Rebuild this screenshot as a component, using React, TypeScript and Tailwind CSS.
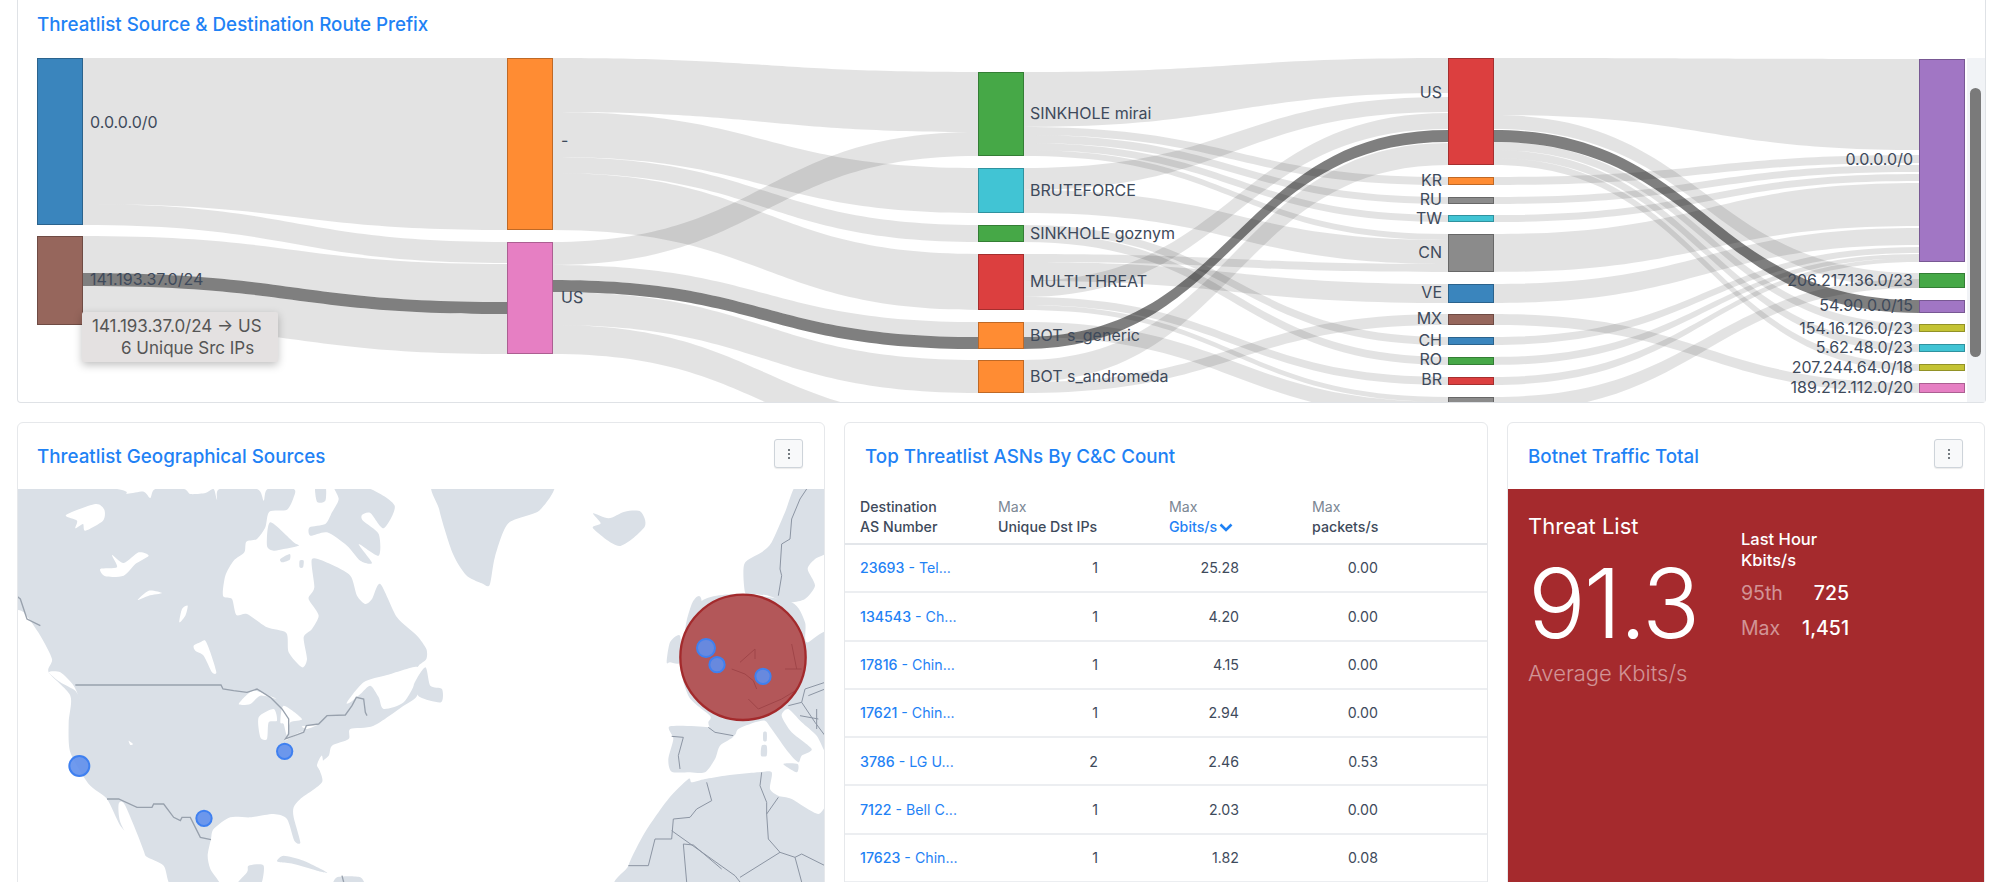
import React from "react";

const X = [82, 552, 1023, 1493];
const XE = [507, 978, 1448, 1919];
type L = [number, number, number, number, number, boolean?];
const links: L[] = [
  [0, 58, 204, 58, 230],
  [0, 204, 225, 242, 263],
  [0, 236, 273, 264, 302],
  [0, 286, 325, 314, 354],
  [0, 273, 286, 302, 314, true],
  [1, 58, 112, 72, 132],
  [1, 112, 157, 168, 213],
  [1, 157, 173, 225, 242],
  [1, 173, 230, 254, 310],
  [1, 242, 265, 132, 156],
  [1, 265, 280, 322, 337],
  [1, 292, 325, 360, 393],
  [1, 325, 354, 420, 450],
  [1, 280, 292, 337, 349, true],
  [2, 72, 127, 58, 93],
  [2, 168, 190, 97, 112],
  [2, 127, 135, 177, 185],
  [2, 135, 143, 197, 204],
  [2, 143, 150, 215, 222],
  [2, 150, 156, 234, 240],
  [2, 190, 213, 240, 264],
  [2, 225, 233, 337, 345],
  [2, 233, 242, 357, 365],
  [2, 254, 262, 264, 272],
  [2, 262, 281, 284, 303],
  [2, 281, 297, 113, 129],
  [2, 297, 305, 377, 385],
  [2, 305, 310, 397, 402],
  [2, 322, 337, 402, 417],
  [2, 360, 382, 143, 165],
  [2, 382, 393, 314, 325],
  [2, 337, 349, 130, 142, true],
  [3, 58, 115, 59, 150],
  [3, 115, 129, 273, 288],
  [3, 142, 150, 324, 332],
  [3, 150, 158, 344, 352],
  [3, 158, 165, 364, 371],
  [3, 177, 185, 155, 163],
  [3, 197, 204, 165, 172],
  [3, 215, 222, 174, 181],
  [3, 234, 272, 183, 226],
  [3, 284, 303, 228, 245],
  [3, 314, 325, 383, 393],
  [3, 337, 345, 247, 253],
  [3, 357, 365, 254, 258],
  [3, 377, 385, 258, 262],
  [3, 397, 412, 279, 288],
  [3, 130, 142, 300, 313, true],
];

function ribbon(l: L) {
  const x0 = X[l[0]];
  const x1 = XE[l[0]];
  const m = (x0 + x1) / 2;
  return `M${x0} ${l[1]}C${m} ${l[1]} ${m} ${l[3]} ${x1} ${l[3]}L${x1} ${l[4]}C${m} ${l[4]} ${m} ${l[2]} ${x0} ${l[2]}Z`;
}

type N = [number, number, number, string, string];
const nodes: N[] = [
  [37, 58, 225, "#3a85bd", "#2b638d"],
  [37, 236, 325, "#96665c", "#6f4b44"],
  [507, 58, 230, "#ff8c33", "#bf6926"],
  [507, 242, 354, "#e67fc3", "#ac5f92"],
  [978, 72, 156, "#46a847", "#347e35"],
  [978, 168, 213, "#41c4d4", "#30929f"],
  [978, 225, 242, "#46a847", "#347e35"],
  [978, 254, 310, "#dc3f3f", "#a52f2f"],
  [978, 322, 349, "#ff8c33", "#bf6926"],
  [978, 360, 393, "#ff8c33", "#bf6926"],
  [1448, 58, 165, "#dc3f3f", "#a52f2f"],
  [1448, 177, 185, "#ff8c33", "#bf6926"],
  [1448, 197, 204, "#8b8b8b", "#686868"],
  [1448, 215, 222, "#41c4d4", "#30929f"],
  [1448, 234, 272, "#8b8b8b", "#686868"],
  [1448, 284, 303, "#3a85bd", "#2b638d"],
  [1448, 314, 325, "#96665c", "#6f4b44"],
  [1448, 337, 345, "#3a85bd", "#2b638d"],
  [1448, 357, 365, "#46a847", "#347e35"],
  [1448, 377, 385, "#dc3f3f", "#a52f2f"],
  [1448, 397, 425, "#8b8b8b", "#686868"],
  [1919, 59, 262, "#a176c4", "#785893"],
  [1919, 273, 288, "#46a847", "#347e35"],
  [1919, 300, 313, "#a176c4", "#785893"],
  [1919, 324, 332, "#c4c334", "#929227"],
  [1919, 344, 352, "#41c4d4", "#30929f"],
  [1919, 364, 371, "#c4c334", "#929227"],
  [1919, 383, 393, "#e67fc3", "#ac5f92"],
];

type T = [string, number, number];
const startLabels: T[] = [
  ["0.0.0.0/0", 90, 122],
  ["141.193.37.0/24", 90, 279],
  ["-", 561, 140],
  ["US", 561, 297],
  ["SINKHOLE mirai", 1030, 113],
  ["BRUTEFORCE", 1030, 190],
  ["SINKHOLE goznym", 1030, 233],
  ["MULTI_THREAT", 1030, 281],
  ["BOT s_generic", 1030, 335],
  ["BOT s_andromeda", 1030, 376],
];
const endLabels: T[] = [
  ["US", 1442, 92],
  ["KR", 1442, 180],
  ["RU", 1442, 199],
  ["TW", 1442, 218],
  ["CN", 1442, 252],
  ["VE", 1442, 292],
  ["MX", 1442, 318],
  ["CH", 1442, 340],
  ["RO", 1442, 359],
  ["BR", 1442, 379],
  ["0.0.0.0/0", 1913, 159],
  ["206.217.136.0/23", 1913, 280],
  ["54.90.0.0/15", 1913, 305],
  ["154.16.126.0/23", 1913, 328],
  ["5.62.48.0/23", 1913, 347],
  ["207.244.64.0/18", 1913, 367],
  ["189.212.112.0/20", 1913, 387],
];

function Sankey() {
  return (
    <svg width={1967} height={345} viewBox="18 58 1967 345" className="block">
      {links.map((l, i) => (
        <path key={i} d={ribbon(l)} fill="#000" fillOpacity={l[5] ? 0.5 : 0.11} />
      ))}
      {nodes.map((n, i) => (
        <rect key={i} x={n[0] + 0.5} y={n[1] + 0.5} width={45} height={n[2] - n[1] - 1} fill={n[3]} stroke={n[4]} />
      ))}
      <g fill="#3e4a5b" fontSize={16} dominantBaseline="central">
        {startLabels.map((t, i) => (
          <text key={i} x={t[1]} y={t[2]}>{t[0]}</text>
        ))}
        {endLabels.map((t, i) => (
          <text key={i} x={t[1]} y={t[2]} textAnchor="end">{t[0]}</text>
        ))}
      </g>
    </svg>
  );
}

function smooth(pts: string) {
  const p = pts.split(" ").map((s) => s.split(",").map(Number));
  const n = p.length;
  let d = `M${p[0][0]} ${p[0][1]}`;
  const k = 1 / 8;
  for (let i = 0; i < n; i++) {
    const a = p[(i - 1 + n) % n];
    const b = p[i];
    const c = p[(i + 1) % n];
    const e = p[(i + 2) % n];
    d += `C${b[0] + (c[0] - a[0]) * k} ${b[1] + (c[1] - a[1]) * k} ${c[0] - (e[0] - b[0]) * k} ${c[1] - (e[1] - b[1]) * k} ${c[0]} ${c[1]}`;
  }
  return d + "Z";
}

const LAND = "#dae0e7";
const polys = [
  "-60,-60 300,0 330,14 380,8 400,27 415,0 500,0 520,15 565,12 590,0 600,32 608,0 720,0 740,35 752,0 830,0 830,25 810,62 757,68 745,115 720,150 688,158 682,190 650,215 625,260 618,320 645,330 658,378 690,375 750,415 808,432 815,490 855,535 870,510 860,445 885,420 905,380 880,340 875,325 892,295 885,210 940,225 1000,260 1020,320 1045,345 1065,330 1090,285 1140,385 1200,440 1228,480 1228,510 1205,530 1190,560 1200,620 1160,650 1070,710 1000,720 995,750 945,770 935,800 905,830 915,880 850,930 830,955 830,985 850,1060 832,1055 810,990 770,975 700,985 640,985 590,1020 582,1050 572,1100 580,1140 610,1200 470,1200 440,1130 385,1100 350,1050 310,1010 270,930 215,885 160,790 155,700 160,620 95,550 105,510 70,440 20,370 -40,320",
  "760,100 830,160 845,170 800,180 770,185 750,170",
  "950,-20 1060,0 1133,50 1100,118 1060,72 1035,78 1038,95 1085,135 1085,200 1025,165 1065,222 1030,215 990,170 930,130 880,140 878,115 925,105 945,70 965,30",
  "790,210 818,195 818,212 795,220",
  "848,215 860,215 858,235 848,235",
  "895,-10 925,-10 925,35 900,38",
  "780,1115 800,1100 860,1115 930,1150 900,1145 830,1125 790,1120",
  "650,1200 690,1150 695,1130 740,1130 725,1200",
  "960,1165 1030,1165 1040,1200 950,1200",
  "1259,-30 1601,-30 1569,63 1474,103 1434,203 1418,288 1394,283 1347,258 1307,193 1267,63",
  "1728,73 1775,88 1823,68 1871,68 1883,113 1807,171 1728,118 1751,103",
];
const whites = [
  "250,240 300,235 285,198 320,222 365,190 395,200 355,225 320,260 265,262",
  "147,78 235,45 262,62 258,95 205,125 198,105 175,118 180,95",
  "362,333 395,305 435,312 395,320",
  "487,400 495,360 512,350 505,380",
  "530,470 550,460 565,455 580,490 598,550 585,550 560,500 535,485",
  "665,645 710,605 780,630 730,620 700,645",
  "725,685 770,660 780,695 755,700 750,750 730,745",
  "800,650 855,690 820,700 810,740 800,705 790,700",
  "855,712 900,708 870,720",
  "805,750 860,725 810,752",
  "990,640 1040,580 1110,558 1200,533 1200,570 1160,640 1100,660 1085,625 1060,590 1030,615 1000,640",
  "900,830 915,800 920,850",
  "305,945 325,950 385,1100 350,1075 310,1000",
  "335,755 348,765 340,768",
  "95,550 130,550 170,590 188,630 175,605 130,580",
  "20,465 40,465 45,510 20,480",
];
const islands = ["1190,590 1225,535 1240,590 1275,600 1272,640 1210,625"];
const borders = [
  "0,322 10,330 30,390 70,410",
  "175,588 612,588 618,600 650,605 690,610 720,600 760,625 795,660 815,690 815,735 805,750 860,730 868,710 905,705 930,680 985,678 1005,650 1018,625 1040,630 1045,670 1050,680",
  "270,930 305,930 360,955 405,955 410,945 440,945 470,985 490,995 495,985 520,985 535,1015 550,1045 582,1052",
  "975,1160 980,1179",
];
const euLand = [
  "520,-20 620,-20 620,170 570,210 548,240 570,290 540,330 500,340 470,335 430,320 380,315 360,310 358,225 410,190 440,160 480,70",
  "255,680 190,620 165,500 225,340 350,315 500,340 540,400 545,460 620,440 620,800 575,740 530,700 490,660 470,680 500,730 560,780 530,800 520,820 490,790 440,720 420,695 390,700 340,720 325,740 260,720 250,700",
  "135,712 250,715 325,740 285,770 270,810 240,850 195,850 140,848 130,810 145,750",
  "415,730 425,730 425,755 415,755",
  "410,770 425,770 425,800 408,800",
  "475,825 518,825 515,850",
  "185,395 205,335 230,335 240,560 200,570 180,450",
  "125,520 135,460 165,440 165,520 135,520",
  "200,880 240,870 300,860 400,850 440,850 435,900 460,920 500,930 580,975 620,940 620,1200 0,1200 10,1130 60,1030 130,930 190,870",
];
const euBorders = [
  "545,0 525,30 500,90 495,150 470,165 465,240 470,260 460,320",
  "250,715 270,730 325,740",
  "140,742 175,745 160,800 165,840",
  "245,880 260,935 215,960 195,985 145,990 140,1050 90,1050 70,1130 10,1130",
  "140,1025 330,1160 345,1179",
  "345,1165 465,1090 510,1105 530,1095 600,1130",
  "175,1065 205,1068 290,1140",
  "175,1065 185,1179",
  "410,850 405,890 425,940 425,975 460,925",
  "425,975 430,1050 465,1090",
  "510,1105 530,1179",
  "320,540 360,555 385,575 395,600",
  "345,520 390,480 390,510",
  "500,465 515,540",
  "480,540 530,540",
  "370,630 400,660 470,630 520,600",
  "490,650 530,640 540,600 600,580",
  "530,640 570,700 600,740",
  "575,660 575,720",
  "550,620 600,600",
  "525,680 580,690",
];
const dots: [number, number, number][] = [
  [187, 831, 33],
  [803, 787, 26],
  [561, 988, 26],
  [2067, 477, 30],
  [2100, 527, 26],
  [2238, 562, 26],
];

function WorldMap() {
  return (
    <svg width={806} height={393} viewBox="3 0 2418 1179" className="block">
      {polys.map((p, i) => <path key={i} d={smooth(p)} fill={LAND} />)}
      {whites.map((p, i) => <path key={i} d={smooth(p)} fill="#fff" />)}
      {islands.map((p, i) => <path key={i} d={smooth(p)} fill={LAND} />)}
      {borders.map((p, i) => <polyline key={i} points={p} fill="none" stroke="#98a1ad" strokeWidth={4} />)}
      <g transform="translate(1824 0)">
        {euLand.map((p, i) => <path key={i} d={smooth(p)} fill={LAND} />)}
        {euBorders.map((p, i) => <polyline key={i} points={p} fill="none" stroke="#8c95a3" strokeWidth={3} />)}
        <circle cx={354} cy={505} r={188} fill="#a52a2a" fillOpacity={0.75} stroke="#a32a2c" strokeWidth={7} />
      </g>
      {dots.map((d, i) => (
        <circle key={i} cx={d[0]} cy={d[1]} r={d[2] - 3} fill="#5f8fec" fillOpacity={0.9} stroke="#3f80f0" strokeWidth={6} />
      ))}
    </svg>
  );
}

function MenuButton() {
  return (
    <button className="flex h-[29px] w-[29px] flex-col items-center justify-center gap-[2px] rounded-[3px] border border-[#ced4da] bg-[#f8f9fa] shadow-[0_1px_1px_rgba(0,0,0,0.08)]">
      <span className="h-[2px] w-[2px] rounded-full bg-[#495057]" />
      <span className="h-[2px] w-[2px] rounded-full bg-[#495057]" />
      <span className="h-[2px] w-[2px] rounded-full bg-[#495057]" />
    </button>
  );
}

const rows = [
  ["23693", "Tel...", "1", "25.28", "0.00"],
  ["134543", "Ch...", "1", "4.20", "0.00"],
  ["17816", "Chin...", "1", "4.15", "0.00"],
  ["17621", "Chin...", "1", "2.94", "0.00"],
  ["3786", "LG U...", "2", "2.46", "0.53"],
  ["7122", "Bell C...", "1", "2.03", "0.00"],
  ["17623", "Chin...", "1", "1.82", "0.08"],
];

function AsnTable() {
  return (
    <table className="w-full table-fixed border-collapse text-[14.2px] leading-[19.5px] text-[#3e4a5b]">
      <colgroup>
        <col className="w-[153px]" />
        <col className="w-[171px]" />
        <col className="w-[143px]" />
        <col />
      </colgroup>
      <thead>
        <tr className="h-[54px] border-b-2 border-[#e3e6ea] align-middle">
          <th className="pl-[15px] text-left font-medium">Destination<br />AS Number</th>
          <th className="text-left font-medium"><span className="font-normal text-[#7b8794]">Max</span><br />Unique Dst IPs</th>
          <th className="text-left font-medium"><span className="font-normal text-[#7b8794]">Max</span><br /><span className="text-[#1f82f5]">Gbits/s</span><svg className="ml-[2px] inline-block" width="14" height="9" viewBox="0 0 14 9" fill="none" stroke="#1f82f5" strokeWidth="2.6"><path d="M1.5 1.5L7 7L12.5 1.5" /></svg></th>
          <th className="text-left font-medium"><span className="font-normal text-[#7b8794]">Max</span><br />packets/s</th>
        </tr>
      </thead>
      <tbody>
        {rows.map((r) => (
          <tr key={r[0]} className="h-[48.3px] border-b-2 border-[#eceef1]">
            <td className="pl-[15px] text-[#1f82f5]"><span className="font-medium">{r[0]}</span> - {r[1]}</td>
            <td className="pr-[71px] text-right">{r[2]}</td>
            <td className="pr-[73px] text-right">{r[3]}</td>
            <td className="w-[66px]"><div className="w-[66px] text-right">{r[4]}</div></td>
          </tr>
        ))}
      </tbody>
    </table>
  );
}

function Title({ children }: { children: React.ReactNode }) {
  return <h2 className="text-[18.8px] leading-[24px] font-medium text-[#1f82f5]">{children}</h2>;
}

export default function App() {
  return (
    <div className="h-[882px] w-[1999px] overflow-hidden bg-white pl-[17px] pr-[13px] font-[Inter,sans-serif]">
      <section className="rounded-b-[4px] border-x border-b border-[#dfe2e6]">
        <div className="h-[58px] pl-[19px] pt-[13px]">
          <Title>Threatlist Source &amp; Destination Route Prefix</Title>
        </div>
        <div className="relative h-[344px] overflow-hidden">
          <Sankey />
          <div className="absolute top-0 right-0 bottom-0 w-[18px] bg-[#f1f3f6]">
            <div className="absolute top-[30px] left-[3px] h-[269px] w-[11px] rounded-full bg-[#7a7a7a]" />
          </div>
          <div className="absolute top-[254px] left-[64px] h-[50px] w-[196px] rounded-[2px] bg-[#e4e1e1] pt-[3px] text-[17px] leading-[22px] text-[#555] shadow-[0_3px_8px_rgba(0,0,0,0.25)]">
            <div className="pl-[10px] whitespace-nowrap">141.193.37.0/24 → US</div>
            <div className="pl-[39px] whitespace-nowrap">6 Unique Src IPs</div>
          </div>
        </div>
      </section>
      <div className="mt-[19px] flex gap-[19px]">
        <section className="h-[470px] w-[808px] overflow-hidden rounded-t-[6px] border border-[#e6e8eb]">
          <div className="flex h-[66px] items-start justify-between pr-[21px] pl-[19px] pt-[16px]">
            <div className="pt-[6px]"><Title>Threatlist Geographical Sources</Title></div>
            <MenuButton />
          </div>
          <WorldMap />
        </section>
        <section className="h-[470px] w-[644px] overflow-hidden rounded-t-[6px] border border-[#e6e8eb]">
          <div className="h-[67px] pl-[20px] pt-[22px]"><Title>Top Threatlist ASNs By C&amp;C Count</Title></div>
          <AsnTable />
        </section>
        <section className="h-[470px] w-[478px] overflow-hidden rounded-t-[6px] border border-[#e6e8eb]">
          <div className="flex h-[66px] items-start justify-between pr-[21px] pl-[20px] pt-[16px]">
            <div className="pt-[6px]"><Title>Botnet Traffic Total</Title></div>
            <MenuButton />
          </div>
          <div className="flex h-[400px] bg-[#a52a2d] pl-[20px] text-white">
            <div className="w-[213px] pt-[21px]">
              <div className="text-[22px] leading-[32px]">Threat List</div>
              <div className="mt-[11px] text-[96px] leading-[100px] font-light tracking-[-2px]">91.3</div>
              <div className="mt-[6px] text-[22px] leading-[28px] font-light text-white/50">Average Kbits/s</div>
            </div>
            <div className="w-[108px] pt-[40px]">
              <div className="text-[16.5px] leading-[21px] font-medium">Last Hour<br />Kbits/s</div>
              <div className="mt-[5px] flex h-[35px] items-center justify-between text-[19.5px]"><span className="text-white/50">95th</span><span className="font-medium">725</span></div>
              <div className="flex h-[35px] items-center justify-between text-[19.5px]"><span className="text-white/50">Max</span><span className="font-medium">1,451</span></div>
            </div>
          </div>
        </section>
      </div>
    </div>
  );
}
